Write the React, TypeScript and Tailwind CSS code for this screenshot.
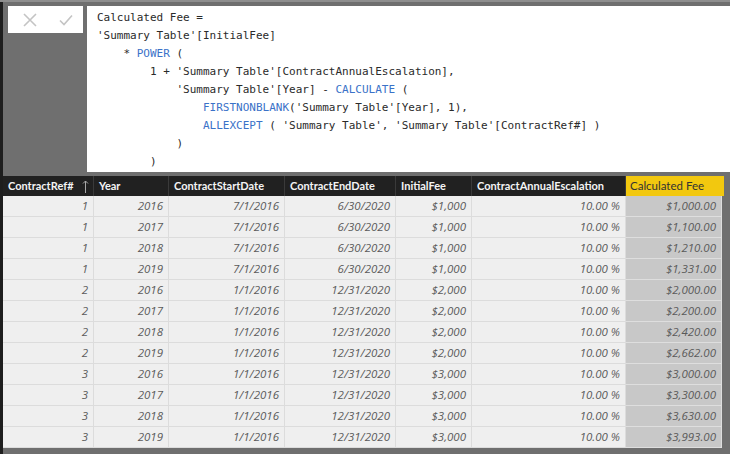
import React from "react";

const B = ({ children }: { children: React.ReactNode }) => (
  <span className="text-[#3a72c8]">{children}</span>
);

type Row = [string, string, string, string, string, string, string];

const rows: Row[] = [
  ["1", "2016", "7/1/2016", "6/30/2020", "$1,000", "10.00 %", "$1,000.00"],
  ["1", "2017", "7/1/2016", "6/30/2020", "$1,000", "10.00 %", "$1,100.00"],
  ["1", "2018", "7/1/2016", "6/30/2020", "$1,000", "10.00 %", "$1,210.00"],
  ["1", "2019", "7/1/2016", "6/30/2020", "$1,000", "10.00 %", "$1,331.00"],
  ["2", "2016", "1/1/2016", "12/31/2020", "$2,000", "10.00 %", "$2,000.00"],
  ["2", "2017", "1/1/2016", "12/31/2020", "$2,000", "10.00 %", "$2,200.00"],
  ["2", "2018", "1/1/2016", "12/31/2020", "$2,000", "10.00 %", "$2,420.00"],
  ["2", "2019", "1/1/2016", "12/31/2020", "$2,000", "10.00 %", "$2,662.00"],
  ["3", "2016", "1/1/2016", "12/31/2020", "$3,000", "10.00 %", "$3,000.00"],
  ["3", "2017", "1/1/2016", "12/31/2020", "$3,000", "10.00 %", "$3,300.00"],
  ["3", "2018", "1/1/2016", "12/31/2020", "$3,000", "10.00 %", "$3,630.00"],
  ["3", "2019", "1/1/2016", "12/31/2020", "$3,000", "10.00 %", "$3,993.00"],
];

const headers = [
  "ContractRef#",
  "Year",
  "ContractStartDate",
  "ContractEndDate",
  "InitialFee",
  "ContractAnnualEscalation",
];

const gridCols = "grid grid-cols-[91px_75px_116px_111px_76px_154px_98px]";

export default function App() {
  return (
    <div className="w-[730px] h-[454px] bg-[#6f6f6f] flex flex-col overflow-hidden">
      <div className="h-[2px] bg-[#8e8e8e] shrink-0" />
      <div className="flex flex-1 min-h-0">
        <div className="w-[3px] bg-[#1e1e1e] shrink-0" />
        <div className="flex-1 flex flex-col min-w-0">
          {/* formula bar */}
          <div className="flex pt-[4px] h-[170px] shrink-0">
            <div className="w-[84px] shrink-0 pl-[5px]">
              <div className="w-[75px] h-[27px] bg-white flex items-center">
                <svg width="14" height="14" viewBox="0 0 14 14" className="ml-[15px]">
                  <path d="M1 1 L13 13 M13 1 L1 13" stroke="#c4c4c4" strokeWidth="1.6" fill="none" />
                </svg>
                <svg width="14" height="12" viewBox="0 0 14 12" className="ml-[22px]">
                  <path d="M1 6.5 L5 10.5 L13 1.5" stroke="#c4c4c4" strokeWidth="1.6" fill="none" />
                </svg>
              </div>
            </div>
            <div className="flex-1 bg-white pl-[10px] pt-[3px] font-['DejaVu_Sans_Mono',monospace] text-[11px] leading-[18px] text-[#2a2a2a] whitespace-pre">
              <div>Calculated Fee =</div>
              <div>'Summary Table'[InitialFee]</div>
              <div>
                {"    * "}
                <B>POWER</B>
                {" ("}
              </div>
              <div>{"        1 + 'Summary Table'[ContractAnnualEscalation],"}</div>
              <div>
                {"            'Summary Table'[Year] - "}
                <B>CALCULATE</B>
                {" ("}
              </div>
              <div>
                {"                "}
                <B>FIRSTNONBLANK</B>
                {"('Summary Table'[Year], 1),"}
              </div>
              <div>
                {"                "}
                <B>ALLEXCEPT</B>
                {" ( 'Summary Table', 'Summary Table'[ContractRef#] )"}
              </div>
              <div>{"            )"}</div>
              <div>{"        )"}</div>
            </div>
          </div>
          <div className="h-[4px] shrink-0" />
          {/* table */}
          <div className="w-[721px] shrink-0">
            <div className={`${gridCols} h-[20px] bg-[#212121]`}>
              {headers.map((h, i) => (
                <div
                  key={h}
                  className="border-r border-[#3a3a3a] flex items-center pl-[5px] pr-[4px] font-['Lato',sans-serif] font-bold text-[11px] text-[#f4f4f4] whitespace-nowrap overflow-hidden"
                >
                  <span className="flex-1">{h}</span>
                  {i === 0 && (
                    <svg width="7" height="13" viewBox="0 0 7 13">
                      <path d="M3.5 1 V13 M1 3.5 L3.5 1 L6 3.5" stroke="#a8a8a8" strokeWidth="1" fill="none" />
                    </svg>
                  )}
                </div>
              ))}
              <div className="bg-[#f2c80f] flex items-center pl-[4px] font-['Lato',sans-serif] text-[11.5px] text-[#333] whitespace-nowrap">
                Calculated Fee
              </div>
            </div>
            {rows.map((r, ri) => (
              <div key={ri} className={`${gridCols} h-[21px]`}>
                {r.map((c, ci) => (
                  <div
                    key={ci}
                    className={`border-b border-r flex items-center justify-end pr-[5px] font-['Open_Sans',sans-serif] italic text-[11.5px] text-[#5a5a5a] whitespace-nowrap ${
                      ci === 6
                        ? "bg-[#c8c8c8] border-[#dedede] mr-[2px]"
                        : "bg-[#efefef] border-[#dcdcdc]"
                    }`}
                  >
                    {c}
                  </div>
                ))}
              </div>
            ))}
          </div>
        </div>
      </div>
    </div>
  );
}
